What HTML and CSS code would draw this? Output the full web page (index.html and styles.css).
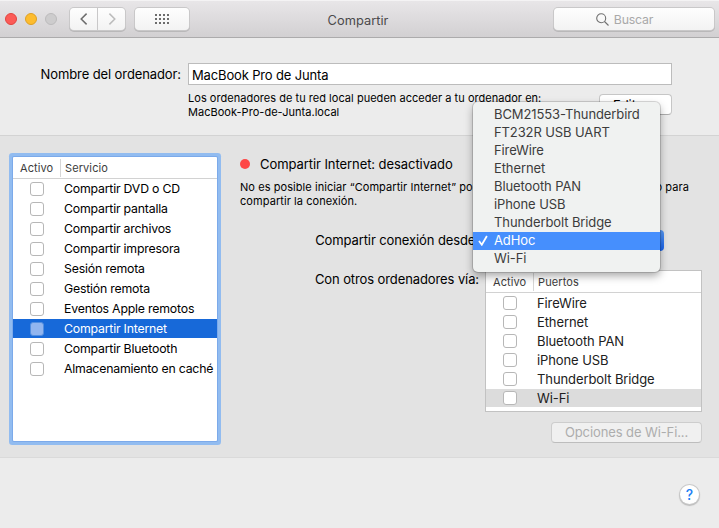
FILE: index.html
```html
<!DOCTYPE html>
<html lang="es">
<head>
<meta charset="utf-8">
<title>Compartir</title>
<link rel="stylesheet" href="styles.css">
</head>
<body>
<div class="window">
  <header class="toolbar">
    <div class="lights"><i class="light close"></i><i class="light minimize"></i><i class="light disabled"></i></div>
    <div class="nav">
      <button class="nav-btn back"><svg width="8" height="12" viewBox="0 0 8 12"><path d="M6.6 .6 1.2 6l5.4 5.4"/></svg></button>
      <button class="nav-btn forward"><svg width="8" height="12" viewBox="0 0 8 12"><path d="M1.4 .6 6.8 6l-5.4 5.4"/></svg></button>
    </div>
    <button class="grid-btn"><svg width="15" height="11" viewBox="0 0 15 11"><path d="M0 1h2M4 1h2M8 1h2M12 1h2M0 5h2M4 5h2M8 5h2M12 5h2M0 9h2M4 9h2M8 9h2M12 9h2"/></svg></button>
    <h1 class="title">Compartir</h1>
    <div class="search"><svg width="13" height="13" viewBox="0 0 13 13"><circle cx="5.2" cy="5.2" r="4.5"/><path d="m8.5 8.5 4 4"/></svg><span>Buscar</span></div>
  </header>

  <section class="computer">
    <label class="name-label">Nombre del ordenador:</label>
    <div class="name-body">
      <div class="name-field">MacBook Pro de Junta</div>
      <div class="name-row">
        <p class="small">Los ordenadores de tu red local pueden acceder a tu ordenador en:<br>MacBook-Pro-de-Junta.local</p>
        <button class="button edit">Editar...</button>
      </div>
    </div>
  </section>

  <section class="sharing">
    <div class="table services">
      <div class="thead"><span class="th-a">Activo</span><span class="th-b">Servicio</span></div>
      <div class="row"><i class="check"></i><span>Compartir DVD o CD</span></div>
      <div class="row"><i class="check"></i><span>Compartir pantalla</span></div>
      <div class="row"><i class="check"></i><span>Compartir archivos</span></div>
      <div class="row"><i class="check"></i><span>Compartir impresora</span></div>
      <div class="row"><i class="check"></i><span>Sesión remota</span></div>
      <div class="row"><i class="check"></i><span>Gestión remota</span></div>
      <div class="row"><i class="check"></i><span>Eventos Apple remotos</span></div>
      <div class="row selected"><i class="check"></i><span>Compartir Internet</span></div>
      <div class="row"><i class="check"></i><span>Compartir Bluetooth</span></div>
      <div class="row"><i class="check"></i><span>Almacenamiento en caché</span></div>
    </div>
    <div class="detail">
      <div class="status"><i class="dot"></i><span>Compartir Internet: desactivado</span></div>
      <div class="small note"><div class="note-line"><span>No es posible iniciar “Compartir Internet” porque</span><span>no para</span></div><div>compartir la conexión.</div></div>
      <div class="from"><span class="form-label">Compartir conexión desde:</span>
        <div class="select">
          <ul class="menu">
            <li>BCM21553-Thunderbird</li>
            <li>FT232R USB UART</li>
            <li>FireWire</li>
            <li>Ethernet</li>
            <li>Bluetooth PAN</li>
            <li>iPhone USB</li>
            <li>Thunderbolt Bridge</li>
            <li class="active"><svg width="10" height="11" viewBox="0 0 10 11"><path d="m1 6 2.8 3.7L8.9 1"/></svg>AdHoc</li>
            <li>Wi-Fi</li>
          </ul>
        </div>
      </div>
      <div class="via"><span class="form-label">Con otros ordenadores vía:</span>
        <div class="table ports">
          <div class="thead"><span class="th-a">Activo</span><span class="th-b">Puertos</span></div>
          <div class="row"><i class="check"></i><span>FireWire</span></div>
          <div class="row"><i class="check"></i><span>Ethernet</span></div>
          <div class="row"><i class="check"></i><span>Bluetooth PAN</span></div>
          <div class="row"><i class="check"></i><span>iPhone USB</span></div>
          <div class="row"><i class="check"></i><span>Thunderbolt Bridge</span></div>
          <div class="row current"><i class="check"></i><span>Wi-Fi</span></div>
        </div>
      </div>
      <button class="button options" disabled>Opciones de Wi-Fi...</button>
    </div>
  </section>

  <footer class="footer"><button class="help">?</button></footer>
</div>
</body>
</html>
```

FILE: styles.css
```css
* { box-sizing: border-box; }
body { margin: 0; background: #ececec; }
.window {
  width: 719px; height: 528px; overflow: hidden;
  display: flex; flex-direction: column;
  background: #ececec; color: #000;
  font: 13px/18px Inter, "Liberation Sans", sans-serif;
  letter-spacing: -0.1px; white-space: nowrap;
}
button { font: inherit; letter-spacing: inherit; padding: 0; border: 0; }
svg { display: block; fill: none; }

.toolbar {
  height: 38px; flex: none; display: flex; align-items: center;
  padding: 0 5px 0 5px;
  background: linear-gradient(#e8e6e8, #d2d0d2);
  border-top: 1px solid #f4f3f4; border-bottom: 1px solid #acabac;
}
.lights { display: flex; gap: 8px; width: 64px; }
.light { width: 12px; height: 12px; border-radius: 50%; }
.close { background: #fc5b57; border: 1px solid #e2443f; }
.minimize { background: #fdbc2e; border: 1px solid #dfa023; }
.disabled { background: #cdcccd; border: 1px solid #bcbbbc; }
.nav { display: flex; gap: 1px; width: 65px; }
.nav-btn, .grid-btn, .search {
  height: 22px; background: linear-gradient(#fefefe, #f3f3f3);
  box-shadow: 0 0 0 1px #c9c8c9, 0 1px 0 1px #b9b8b9;
  display: flex; align-items: center; justify-content: center;
}
.nav-btn { width: 27px; }
.back { border-radius: 4px 0 0 4px; margin-left: 1px; }
.forward { border-radius: 0 4px 4px 0; }
.nav-btn path { stroke: #6e6e6e; stroke-width: 1.5; }
.forward path { stroke: #bcbcbc; }
.grid-btn { width: 54px; border-radius: 4px; margin-left: 1px; }
.grid-btn path { stroke: #6c6c6c; stroke-width: 2; }
.title { margin: 4px 0 0; width: 338px; text-align: center; font-size: 12.8px; font-weight: 400; color: #4b4a4b; letter-spacing: .05px; }
.search { flex: none; width: 160px; border-radius: 4px; margin-left: auto; padding-right: 19px; gap: 5px; color: #a9a9a9; font-size: 12.3px; letter-spacing: -.2px; }
.search span { padding-top: 1px; }
.search svg { stroke: #707070; stroke-width: 1.1; }

.computer { height: 98px; flex: none; display: flex; padding: 25px 47px 0 0; border-bottom: 1px solid #d3d3d3; }
.name-label { width: 188px; padding: 2px 7px 0 0; text-align: right; }
.name-body { flex: 1; }
.name-field { height: 22px; border: 1px solid #bcbcbc; background: #fff; padding: 2px 3px; line-height: 19px; letter-spacing: -.15px; }
.name-row { display: flex; justify-content: space-between; }
.small { margin: 0; font-size: 11px; line-height: 14px; letter-spacing: .03px; }
.name-row .small { padding-top: 6px; }
.button { height: 21px; border-radius: 4px; border: 1px solid #c6c6c6; border-bottom-color: #adadad; background: #fff; text-align: center; line-height: 19px; color: #000; }
.edit { width: 73px; margin-top: 9px; flex: none; padding-top: 1px; }

.sharing { height: 322px; flex: none; display: flex; padding-left: 10px; background: #e3e3e3; border-bottom: 1px solid #dadada; }
.table { background: #fff; }
.thead { display: flex; align-items: center; font-size: 11px; color: #3c3c3c; border-bottom: 1px solid #d2d2d2; letter-spacing: .1px; }
.th-b { border-left: 1px solid #d6d6d6; padding-left: 4px; }
.row { display: flex; align-items: center; }
.check { width: 14px; height: 14px; border: 1px solid #b7b7b7; border-radius: 3px; background: #fff; flex: none; }
.services { width: 204px; height: 284px; margin: 21px 0 0 3px; box-shadow: 0 0 0 1px #7caaea, 0 0 0 4px #92bcf0; border-radius: 1px; font-size: 12.3px; letter-spacing: -.2px; }
.services .thead { height: 22px; }
.services .th-a { width: 47px; padding-left: 7px; }
.services .row { height: 19px; margin-bottom: 1px; padding: 0 0 0 17px; }
.services .check { margin-right: 20px; }
.services .selected { background: #1769d9; color: #fff; }
.selected .check { background: #91b5ef; border-color: #528ee0; }

.detail { width: 501px; padding: 18px 16px 0 23px; display: flex; flex-direction: column; }
.status { height: 20px; display: flex; align-items: center; gap: 10px; letter-spacing: -.07px; }
.dot { width: 10px; height: 10px; border-radius: 50%; background: #fe4746; }
.note { height: 28px; margin-top: 6px; letter-spacing: .07px; }
.note-line { display: flex; justify-content: space-between; width: 449px; }
.from { display: flex; margin-top: 22px; height: 21px; }
.form-label { width: 246px; padding-right: 7px; text-align: right; line-height: 21px; flex: none; }
.select { position: relative; width: 178px; height: 21px; border-radius: 4px; background: linear-gradient(#5899f5, #1763ee); }
.menu {
  position: absolute; left: -13px; top: -128px; width: 187px; margin: 0; padding: 4px 0;
  list-style: none; background: #f0f2f1; color: #3c3c3c; border-radius: 5px; z-index: 2;
  box-shadow: 0 0 0 1px rgba(0,0,0,.14), 0 4px 9px rgba(0,0,0,.34);
}
.menu li { height: 18px; padding-left: 21px; line-height: 16px; }
.menu .active { display: flex; align-items: center; gap: 6px; padding: 0 0 2px 5px; background: #468ffd; color: #fff; }
.menu svg { stroke: #fff; stroke-width: 1.8; }
.via { display: flex; margin-top: 19px; }
.via .form-label { width: 245px; padding-right: 6px; line-height: 19px; }
.ports { width: 217px; height: 142px; border: 1px solid #c2c2c2; }
.ports .thead { height: 22px; margin-bottom: 1px; }
.ports .th-a { width: 47px; padding-left: 7px; }
.ports .row { height: 18px; margin-bottom: 1px; padding-left: 17px; color: #202020; }
.ports .row.current { background: #dcdcdc; }
.ports .check { margin-right: 20px; }
.options { width: 151px; margin: 10px 0 0; align-self: flex-end; background: #f0f0f0; border-color: #cdcdcd; border-bottom-color: #bdbdbd; color: #adadad; }
.footer { flex: 1; display: flex; justify-content: flex-end; padding: 27px 20px 0 0; }
.help { width: 19px; height: 19px; border-radius: 50%; background: #fff; box-shadow: 0 0 0 1px #c9c9c9, 0 1px 1px 1px #bbb; color: #1b80f5; font-size: 14px; font-weight: 500; line-height: 19px; }
```
